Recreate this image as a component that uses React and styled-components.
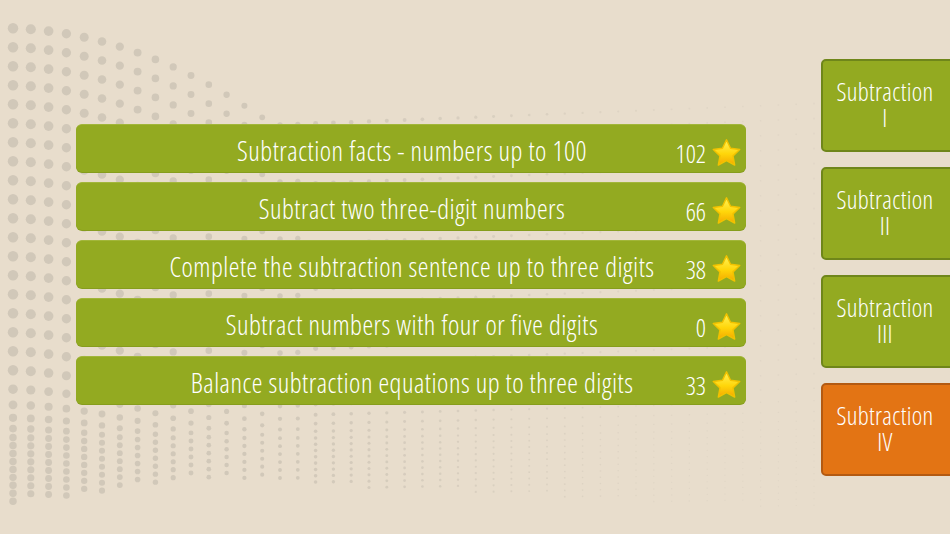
import React, { useMemo } from 'react';
import styled, { createGlobalStyle } from 'styled-components';

const GlobalStyle = createGlobalStyle`
  html, body {
    margin: 0;
    padding: 0;
    background: #e8ddcc;
  }
  body {
    font-family: "Open Sans", "Liberation Sans", sans-serif;
    font-stretch: 75%;
    font-weight: 300;
    overflow: hidden;
  }
`;

const Page = styled.div`
  position: relative;
  width: 950px;
  height: 534px;
  overflow: hidden;
  background: #e8ddcc;
  display: flex;
  align-items: center;
`;

const Backdrop = styled.svg`
  position: absolute;
  left: 0;
  top: 0;
  width: 950px;
  height: 534px;
  z-index: 0;
`;

const Content = styled.div`
  position: relative;
  z-index: 1;
  flex: 1;
  display: flex;
  align-items: center;
  padding-left: 76px;
  gap: 75px;
`;

const List = styled.div`
  width: 670px;
  margin-bottom: 6px;
  display: flex;
  flex-direction: column;
  gap: 10px;
`;

const Row = styled.div`
  height: 48px;
  box-sizing: border-box;
  border-radius: 6px;
  background: #93aa21;
  border-top: 1px solid #a2b63a;
  box-shadow: 0 1px 0 #869d1c;
  display: flex;
  align-items: center;
  padding: 0 4px 0 12px;
  color: #fff;
  cursor: pointer;
`;

const Title = styled.div`
  flex: 1;
  min-width: 0;
  display: flex;
  justify-content: center;
  padding: 3px 0 0 60px;
  white-space: nowrap;
  font-size: 27px;
  letter-spacing: 0.5px;
`;

const Score = styled.div`
  flex-shrink: 0;
  width: 66px;
  display: flex;
  align-items: center;
  justify-content: flex-end;
  gap: 5px;
  align-self: flex-end;
  padding-bottom: 2px;
  font-size: 25px;
`;

const Tabs = styled.div`
  display: flex;
  flex-direction: column;
  gap: 15px;
`;

const Tab = styled.div`
  width: 140px;
  height: 93px;
  box-sizing: border-box;
  padding: 0 12px 2px 0;
  border-radius: 5px;
  border: 2px solid ${p => (p.$active ? '#b35a12' : '#6f861a')};
  background: ${p => (p.$active ? '#e37414' : '#93aa21')};
  color: #fff;
  display: flex;
  align-items: center;
  justify-content: center;
  cursor: pointer;
`;

const TabLabel = styled.div`
  font-size: 25px;
  line-height: 26px;
  letter-spacing: 0.3px;
  text-align: center;
`;

const StarIcon = styled.svg`
  flex-shrink: 0;
  width: 31px;
  height: 31px;
`;

function Star() {
  return (
    <StarIcon viewBox="0 0 30 30">
      <defs>
        <linearGradient id="starFill" x1="0" y1="0" x2="0" y2="1">
          <stop offset="0" stopColor="#fff45a" />
          <stop offset="0.55" stopColor="#ffd60a" />
          <stop offset="1" stopColor="#f4a900" />
        </linearGradient>
      </defs>
      <path
        d="M15 1.8 L18.9 9.9 L27.8 11.1 L21.3 17.3 L22.9 26.2 L15 21.9 L7.1 26.2 L8.7 17.3 L2.2 11.1 L11.1 9.9 Z"
        fill="url(#starFill)"
        stroke="#f2c200"
        strokeWidth="1.4"
        strokeLinejoin="round"
      />
    </StarIcon>
  );
}

// halftone wave behind the page
function makeDots() {
  const dots = [];
  for (let i = 0; i < 46; i++) {
    const x = 13 + i * 17.8;
    const top = x < 280 ? 28 + 0.0013 * x * x : 125 - (x - 280) * 0.04;
    const bottom = x < 200 ? 505 - x * 0.13 : 479 + (x - 200) * 0.05;
    const base = 0.8 + 4.6 * Math.pow(Math.max(0, 1 - x / 800), 2);
    const fade = x < 280 ? 1 : Math.max(0.35, 1 - (x - 280) / 600);
    let y = top;
    while (y < bottom) {
      const s = y < 370 ? 1 : Math.max(0.42, 1 - (y - 370) / 110);
      const r = base * (0.5 + 0.5 * s);
      dots.push({ x, y, r, o: fade });
      y += (x < 300 ? 19 : 15) * s;
    }
  }
  return dots;
}

const lessons = [
  { title: 'Subtraction facts - numbers up to 100', score: 102 },
  { title: 'Subtract two three-digit numbers', score: 66 },
  { title: 'Complete the subtraction sentence up to three digits', score: 38 },
  { title: 'Subtract numbers with four or five digits', score: 0 },
  { title: 'Balance subtraction equations up to three digits', score: 33 },
];

const levels = ['I', 'II', 'III', 'IV'];

export default function App() {
  const dots = useMemo(makeDots, []);
  return (
    <Page>
      <GlobalStyle />
      <Backdrop viewBox="0 0 950 534">
        {dots.map((d, k) => (
          <circle key={k} cx={d.x} cy={d.y} r={d.r} fill="#d1c8b9" opacity={d.o} />
        ))}
      </Backdrop>
      <Content>
        <List>
          {lessons.map(l => (
            <Row key={l.title}>
              <Title>{l.title}</Title>
              <Score>
                <span>{l.score}</span>
                <Star />
              </Score>
            </Row>
          ))}
        </List>
        <Tabs>
          {levels.map((lv, k) => (
            <Tab key={lv} $active={k === 3}>
              <TabLabel>
                Subtraction
                <br />
                {lv}
              </TabLabel>
            </Tab>
          ))}
        </Tabs>
      </Content>
    </Page>
  );
}
